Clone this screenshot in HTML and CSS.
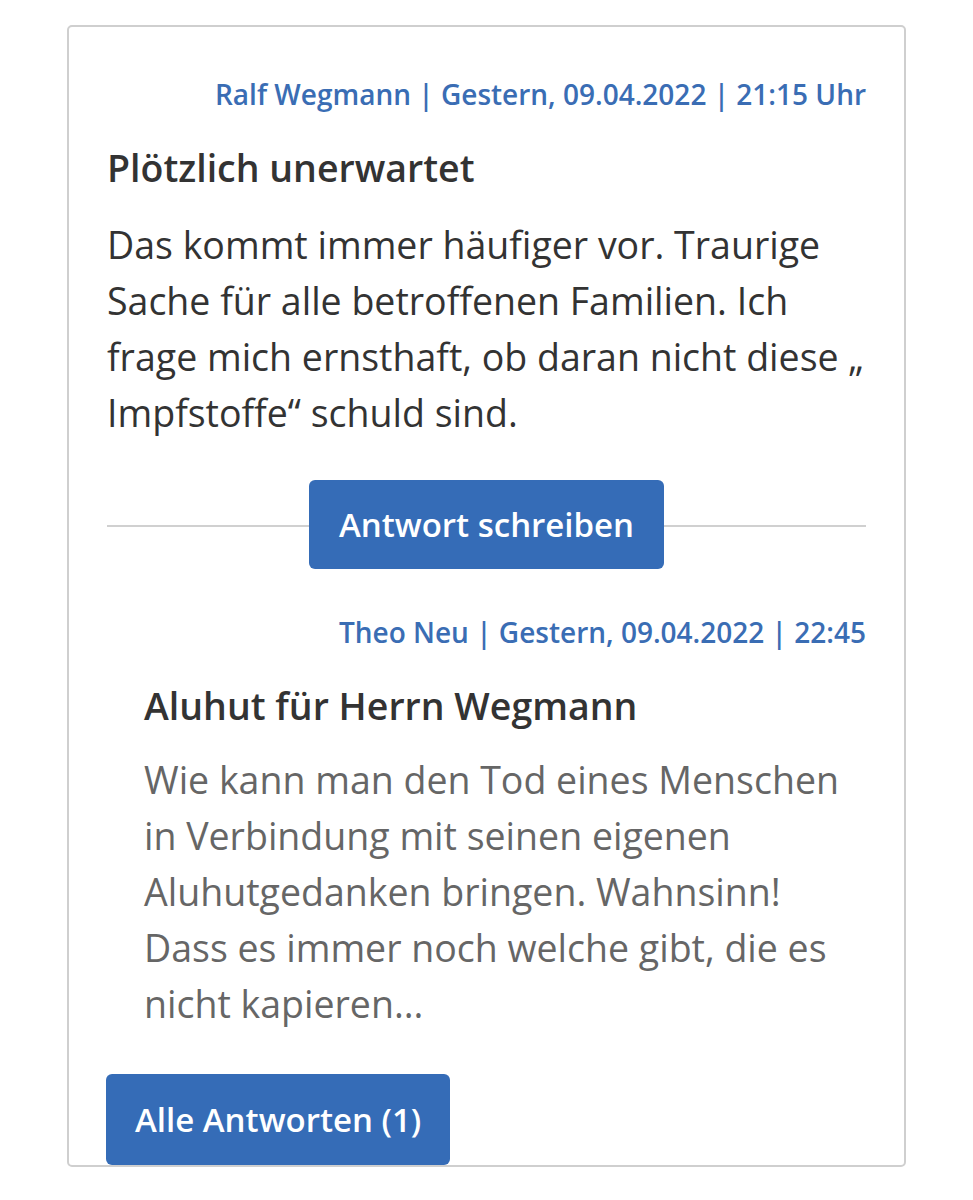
FILE: index.html
```html
<!DOCTYPE html>
<html lang="de">
<head>
    <meta charset="UTF-8">
    <meta name="viewport" content="width=device-width, initial-scale=1.0">
    <title>Kommentare</title>
    <link rel="stylesheet" href="styles.css">
</head>
<body>

<div class="comment-box">
    <!-- Top level comment -->
    <div class="comment-meta">Ralf Wegmann | Gestern, 09.04.2022 | 21:15 Uhr</div>
    <h3 class="comment-title">Plötzlich unerwartet</h3>
    <p class="comment-text">Das kommt immer häufiger vor. Traurige Sache für alle betroffenen Familien. Ich frage mich ernsthaft, ob daran nicht diese „ Impfstoffe“ schuld sind.</p>

    <div class="reply-divider">
        <button class="btn">Antwort schreiben</button>
    </div>

    <!-- Answer -->
    <div class="comment-meta">Theo Neu | Gestern, 09.04.2022 | 22:45</div>
    <div class="reply">
        <h3 class="comment-title">Aluhut für Herrn Wegmann</h3>
        <p class="comment-text">Wie kann man den Tod eines Menschen in Verbindung mit seinen eigenen Aluhutgedanken bringen. Wahnsinn! Dass es immer noch welche gibt, die es nicht kapieren...</p>
    </div>

    <button class="btn btn-all">Alle Antworten (1)</button>
</div>

</body>
</html>
```

FILE: styles.css
```css
body {
    font-family: "Open Sans", Arial, sans-serif;
    background-color: #fff;
    margin: 0;
    padding: 25px 67px 0;
}
.comment-box {
    border: 2px solid #cfcfcf;
    border-radius: 5px;
    padding: 48px 38px 0;
}
.comment-meta {
    text-align: right;
    color: #3a6db4;
    font-size: 28px;
    font-weight: 600;
    line-height: 38px;
}
.comment-title {
    margin: 30px 0 0;
    font-size: 37.5px;
    font-weight: 600;
    line-height: 50px;
    color: #333;
}
.comment-text {
    margin: 24px 0 0;
    font-size: 37.5px;
    line-height: 56px;
    color: #333;
}
.reply-divider {
    margin: 39px 0 44px;
    display: flex;
    align-items: center;
    justify-content: center;
    position: relative;
}
.reply-divider::before {
    content: "";
    position: absolute;
    left: 0;
    right: 0;
    top: 50%;
    border-top: 2px solid #d0d0d0;
}
.reply-divider .btn {
    position: relative;
}
.btn {
    font-family: inherit;
    font-size: 33px;
    font-weight: 600;
    color: #fff;
    background-color: #356cb7;
    border: none;
    border-radius: 6px;
    height: 89px;
    padding: 0 29.5px;
    cursor: pointer;
}
.reply {
    padding-left: 37px;
}
.reply .comment-text {
    margin-top: 21px;
    color: #666;
}
.btn-all {
    margin-top: 42px;
    margin-left: -1px;
    height: 91px;
    padding: 0 29px;
    display: block;
}
```
